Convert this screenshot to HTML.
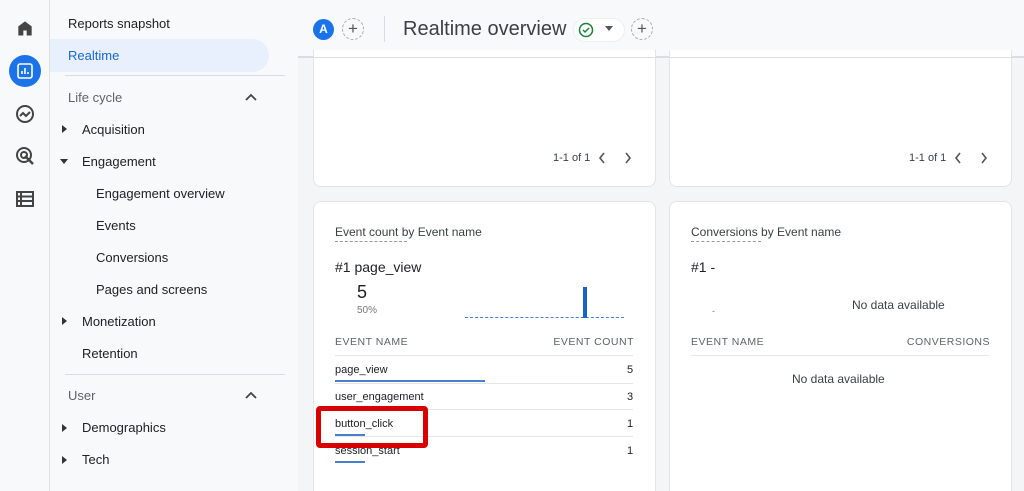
<!DOCTYPE html>
<html><head><meta charset="utf-8"><style>
*{margin:0;padding:0;box-sizing:border-box}
html,body{width:1024px;height:491px;overflow:hidden}
body{font-family:"Liberation Sans",sans-serif;background:#f4f5f7;position:relative;color:#202124}
.abs{position:absolute}
.rail{left:0;top:0;width:50px;height:491px;background:#f8f9fa;border-right:1px solid #e0e0e0}
.nav{left:50px;top:0;width:248px;height:491px;background:#f8f9fa}
.nav div{position:absolute;font-size:13px;color:#202124;white-space:nowrap}
.sec{color:#5f6368 !important}
.hdr{left:298px;top:0;width:726px;height:57px;background:#f8f9fa;border-bottom:1px solid #dadce0}
.card{background:#fff;border:1px solid #e3e4e6;border-radius:8px}
.t{position:absolute;font-size:11px;white-space:nowrap}
.cap{font-size:10.5px;letter-spacing:.5px;color:#5f6368}
.line{position:absolute;height:1px;background:#e6e6e6}
.bar{position:absolute;height:2px;background:#4a7fd0}
.r{text-align:right}
</style></head><body>
<div class="abs rail"></div>
<svg class="abs" style="left:14px;top:18px" width="22" height="20" viewBox="0 0 24 24"><path d="M4 21V10l8-6 8 6v11h-6v-6h-4v6z" fill="#444"/></svg>
<div class="abs" style="left:9px;top:55px;width:32px;height:32px;border-radius:50%;background:#1a73e8"></div>
<svg class="abs" style="left:17px;top:63px" width="16" height="16" viewBox="0 0 16 16"><rect x="1" y="1" width="14" height="14" rx="2" fill="none" stroke="#fff" stroke-width="1.6"/><path d="M5 11V8M8 11V5M11 11V9" stroke="#fff" stroke-width="1.6"/></svg>
<svg class="abs" style="left:15px;top:104px" width="20" height="20" viewBox="0 0 20 20"><circle cx="10" cy="10" r="8" fill="none" stroke="#444" stroke-width="2"/><path d="M5 12l3-3 3 3 4-4" fill="none" stroke="#444" stroke-width="2"/></svg>
<svg class="abs" style="left:15px;top:146px" width="20" height="20" viewBox="0 0 20 20"><circle cx="9" cy="9" r="7" fill="none" stroke="#444" stroke-width="2"/><circle cx="9" cy="9" r="3" fill="none" stroke="#444" stroke-width="2"/><path d="M10 10l8 8" stroke="#444" stroke-width="2.5"/></svg>
<svg class="abs" style="left:16px;top:191px" width="18" height="16" viewBox="0 0 18 16"><rect x="1" y="1" width="16" height="14" fill="none" stroke="#444" stroke-width="2"/><path d="M1 5.5h16M1 10h16M5 1v14" stroke="#444" stroke-width="2"/></svg>
<div class="abs nav">
<div style="left:18px;top:16px">Reports snapshot</div>
<div style="left:0;top:39px;width:219px;height:33px;background:#e8f0fe;border-radius:0 17px 17px 0"></div>
<div style="left:18px;top:48px;color:#1967d2">Realtime</div>
<div style="left:15px;top:75px;width:220px;height:1px;background:#dadce0"></div>
<div class="sec" style="left:18px;top:90px">Life cycle</div>
<svg style="position:absolute;left:195px;top:93px" width="12" height="8" viewBox="0 0 12 8"><path d="M1 7l5-5 5 5" fill="none" stroke="#444" stroke-width="1.8"/></svg>
<svg style="position:absolute;left:12px;top:125px" width="5" height="8"><path d="M0 0l5 4-5 4z" fill="#333"/></svg>
<div style="left:32px;top:122px">Acquisition</div>
<svg style="position:absolute;left:10px;top:159px" width="8" height="5"><path d="M0 0h8l-4 5z" fill="#333"/></svg>
<div style="left:32px;top:154px">Engagement</div>
<div style="left:46px;top:186px">Engagement overview</div>
<div style="left:46px;top:218px">Events</div>
<div style="left:46px;top:250px">Conversions</div>
<div style="left:46px;top:282px">Pages and screens</div>
<svg style="position:absolute;left:12px;top:317px" width="5" height="8"><path d="M0 0l5 4-5 4z" fill="#333"/></svg>
<div style="left:32px;top:314px">Monetization</div>
<div style="left:32px;top:346px">Retention</div>
<div style="left:15px;top:374px;width:220px;height:1px;background:#dadce0"></div>
<div class="sec" style="left:18px;top:388px">User</div>
<svg style="position:absolute;left:195px;top:391px" width="12" height="8" viewBox="0 0 12 8"><path d="M1 7l5-5 5 5" fill="none" stroke="#444" stroke-width="1.8"/></svg>
<svg style="position:absolute;left:12px;top:424px" width="5" height="8"><path d="M0 0l5 4-5 4z" fill="#333"/></svg>
<div style="left:32px;top:420px">Demographics</div>
<svg style="position:absolute;left:12px;top:456px" width="5" height="8"><path d="M0 0l5 4-5 4z" fill="#333"/></svg>
<div style="left:32px;top:452px">Tech</div>
</div>
<div class="abs hdr"></div>
<div class="abs" style="left:313px;top:19px;width:21px;height:21px;border-radius:50%;background:#1a73e8;color:#fff;font-size:12px;text-align:center;line-height:21px;font-weight:bold">A</div>
<div class="abs" style="left:342px;top:18px;width:22px;height:22px;border-radius:50%;border:1px dashed #aaa;text-align:center;line-height:20px;font-size:17px;color:#555">+</div>
<div class="abs" style="left:384px;top:16px;width:1px;height:26px;background:#dadce0"></div>
<div class="abs" style="left:403px;top:18px;font-size:20px;color:#3c4043">Realtime overview</div>
<div class="abs" style="left:573px;top:18px;width:52px;height:24px;border-radius:12px;background:#fff;border:1px solid #eee"></div>
<svg class="abs" style="left:578px;top:22px" width="16" height="16" viewBox="0 0 16 16"><circle cx="8" cy="8" r="6.5" fill="none" stroke="#188038" stroke-width="1.5"/><path d="M5 8l2 2 4-4" fill="none" stroke="#188038" stroke-width="1.5"/></svg>
<div class="abs" style="left:605px;top:26px;width:0;height:0;border:4px solid transparent;border-top:5px solid #555"></div>
<div class="abs" style="left:631px;top:18px;width:22px;height:22px;border-radius:50%;border:1px dashed #aaa;text-align:center;line-height:20px;font-size:17px;color:#555">+</div>

<div class="abs card" style="left:313px;top:50px;width:343px;height:137px;border-top:none;border-radius:0 0 8px 8px"></div>
<div class="t" style="left:553px;top:152px;color:#3c4043">1-1 of 1</div>
<svg class="abs" style="left:598px;top:152px" width="8" height="12"><path d="M6 1L2 6l4 5" fill="none" stroke="#555" stroke-width="1.6"/></svg>
<svg class="abs" style="left:624px;top:152px" width="8" height="12"><path d="M2 1l4 5-4 5" fill="none" stroke="#555" stroke-width="1.6"/></svg>
<div class="abs card" style="left:669px;top:50px;width:343px;height:137px;border-top:none;border-radius:0 0 8px 8px"></div>
<div class="t" style="left:909px;top:152px;color:#3c4043">1-1 of 1</div>
<svg class="abs" style="left:954px;top:152px" width="8" height="12"><path d="M6 1L2 6l4 5" fill="none" stroke="#555" stroke-width="1.6"/></svg>
<svg class="abs" style="left:980px;top:152px" width="8" height="12"><path d="M2 1l4 5-4 5" fill="none" stroke="#555" stroke-width="1.6"/></svg>
<div class="abs" style="left:298px;top:57px;width:726px;height:1px;background:#dadce0"></div>

<div class="abs card" style="left:313px;top:201px;width:343px;height:300px"></div>
<div class="t" style="left:335px;top:225px;font-size:12px;color:#3c4043">Event count by Event name</div>
<div class="abs" style="left:335px;top:241px;width:72px;border-top:1px dashed #999"></div>
<div class="t" style="left:335px;top:259px;font-size:14px">#1 page_view</div>
<div class="t" style="left:357px;top:282px;font-size:18px">5</div>
<div class="t" style="left:357px;top:305px;font-size:10px;color:#777">50%</div>
<div class="abs" style="left:465px;top:317px;width:159px;border-top:1px dashed #4a7fd0"></div>
<div class="abs" style="left:583px;top:287px;width:4px;height:31px;background:#1a62c8"></div>
<div class="t cap" style="left:335px;top:336px">EVENT NAME</div>
<div class="t cap r" style="left:500px;width:134px;top:336px">EVENT COUNT</div>
<div class="line" style="left:335px;top:355px;width:298px"></div>
<div class="t" style="left:335px;top:364px">page_view</div><div class="t" style="left:627px;top:364px">5</div>
<div class="bar" style="left:335px;top:380px;width:150px"></div>
<div class="line" style="left:335px;top:383px;width:298px"></div>
<div class="t" style="left:335px;top:391px">user_engagement</div><div class="t" style="left:627px;top:391px">3</div>
<div class="line" style="left:335px;top:409px;width:298px"></div>
<div class="t" style="left:335px;top:418px">button_click</div><div class="t" style="left:627px;top:418px">1</div>
<div class="bar" style="left:335px;top:434px;width:30px"></div>
<div class="line" style="left:335px;top:436px;width:298px"></div>
<div class="t" style="left:335px;top:445px">session_start</div><div class="t" style="left:627px;top:445px">1</div>
<div class="bar" style="left:335px;top:461px;width:30px"></div>
<div class="abs" style="left:316px;top:406px;width:112px;height:42px;border:5px solid #d90000;border-radius:4px"></div>

<div class="abs card" style="left:669px;top:201px;width:343px;height:300px"></div>
<div class="t" style="left:691px;top:225px;font-size:12px;color:#3c4043">Conversions by Event name</div>
<div class="abs" style="left:691px;top:241px;width:70px;border-top:1px dashed #999"></div>
<div class="t" style="left:691px;top:259px;font-size:14px">#1 -</div>
<div class="t" style="left:712px;top:306px;font-size:9px;color:#777">-</div>
<div class="t" style="left:852px;top:298px;font-size:12px;color:#3c4043">No data available</div>
<div class="t cap" style="left:691px;top:336px">EVENT NAME</div>
<div class="t cap r" style="left:850px;width:140px;top:336px">CONVERSIONS</div>
<div class="line" style="left:691px;top:355px;width:298px"></div>
<div class="t" style="left:792px;top:372px;font-size:12px;color:#3c4043">No data available</div>
</body></html>
